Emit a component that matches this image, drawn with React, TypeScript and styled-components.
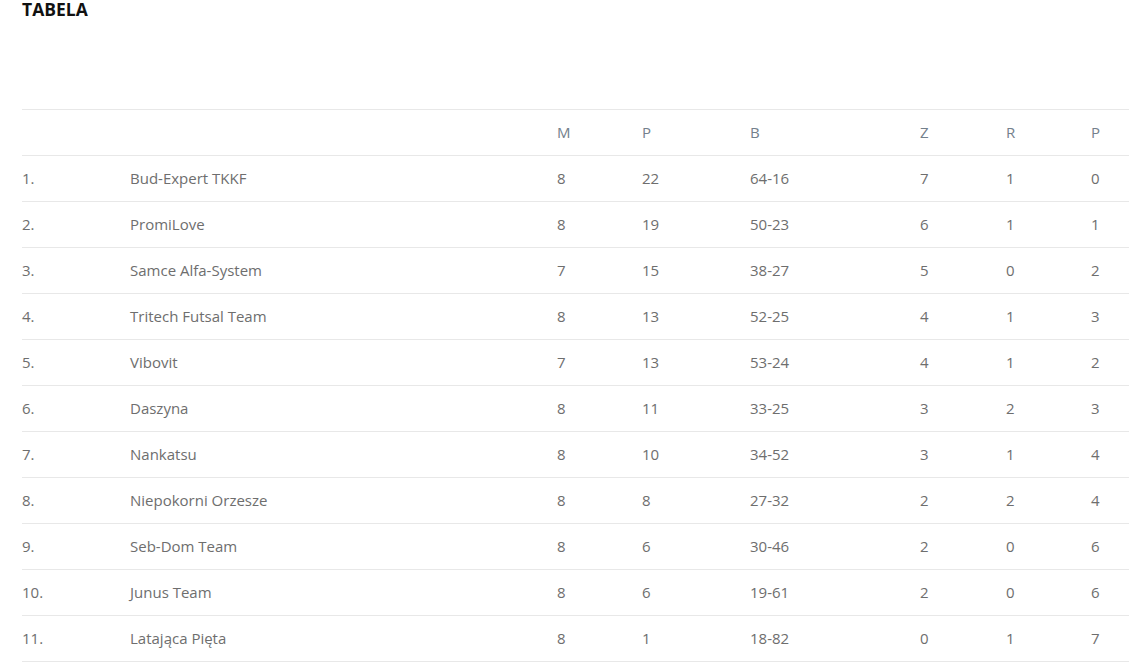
import styled, { createGlobalStyle } from 'styled-components';

const GlobalStyle = createGlobalStyle`
  html, body {
    margin: 0;
    padding: 0;
    background: #fff;
    font-family: 'Open Sans', 'Liberation Sans', sans-serif;
  }
`;

interface Team {
  name: string;
  m: number;
  p: number;
  b: string;
  z: number;
  r: number;
  l: number;
}

const teams: Team[] = [
  { name: 'Bud-Expert TKKF', m: 8, p: 22, b: '64-16', z: 7, r: 1, l: 0 },
  { name: 'PromiLove', m: 8, p: 19, b: '50-23', z: 6, r: 1, l: 1 },
  { name: 'Samce Alfa-System', m: 7, p: 15, b: '38-27', z: 5, r: 0, l: 2 },
  { name: 'Tritech Futsal Team', m: 8, p: 13, b: '52-25', z: 4, r: 1, l: 3 },
  { name: 'Vibovit', m: 7, p: 13, b: '53-24', z: 4, r: 1, l: 2 },
  { name: 'Daszyna', m: 8, p: 11, b: '33-25', z: 3, r: 2, l: 3 },
  { name: 'Nankatsu', m: 8, p: 10, b: '34-52', z: 3, r: 1, l: 4 },
  { name: 'Niepokorni Orzesze', m: 8, p: 8, b: '27-32', z: 2, r: 2, l: 4 },
  { name: 'Seb-Dom Team', m: 8, p: 6, b: '30-46', z: 2, r: 0, l: 6 },
  { name: 'Junus Team', m: 8, p: 6, b: '19-61', z: 2, r: 0, l: 6 },
  { name: 'Latająca Pięta', m: 8, p: 1, b: '18-82', z: 0, r: 1, l: 7 },
];

const App = () => {
  return (
    <>
      <GlobalStyle />
      <Page>
        <Title>TABELA</Title>
        <Table>
          <colgroup>
            <col style={{ width: 108 }} />
            <col style={{ width: 427 }} />
            <col style={{ width: 85 }} />
            <col style={{ width: 108 }} />
            <col style={{ width: 170 }} />
            <col style={{ width: 86 }} />
            <col style={{ width: 85 }} />
            <col style={{ width: 38 }} />
          </colgroup>
          <thead>
            <tr>
              <Th />
              <Th />
              <Th>M</Th>
              <Th>P</Th>
              <Th>B</Th>
              <Th>Z</Th>
              <Th>R</Th>
              <Th>P</Th>
            </tr>
          </thead>
          <tbody>
            {teams.map((t, i) => (
              <tr key={t.name}>
                <Td>{i + 1}.</Td>
                <Td>{t.name}</Td>
                <Td>{t.m}</Td>
                <Td>{t.p}</Td>
                <Td>{t.b}</Td>
                <Td>{t.z}</Td>
                <Td>{t.r}</Td>
                <Td>{t.l}</Td>
              </tr>
            ))}
          </tbody>
        </Table>
      </Page>
    </>
  );
};

export default App;

const Page = styled.div`
  padding: 0 0 0 22px;
`;

const Title = styled.h2`
  margin: 0 0 91px;
  font-size: 17.5px;
  line-height: 18px;
  font-weight: 700;
  color: #111;
  text-transform: uppercase;
`;

const Table = styled.table`
  width: 1107px;
  border-collapse: collapse;
  table-layout: fixed;
  border-top: 1px solid #e8e8e8;
`;

const Th = styled.th`
  height: 43px;
  padding: 0 0 2px;
  text-align: left;
  font-size: 15px;
  font-weight: 400;
  color: #73808c;
  border-bottom: 1px solid #e8e8e8;
`;

const Td = styled.td`
  height: 43px;
  padding: 0 0 2px;
  text-align: left;
  font-size: 15px;
  color: #6e6e6e;
  border-bottom: 1px solid #e8e8e8;
`;
